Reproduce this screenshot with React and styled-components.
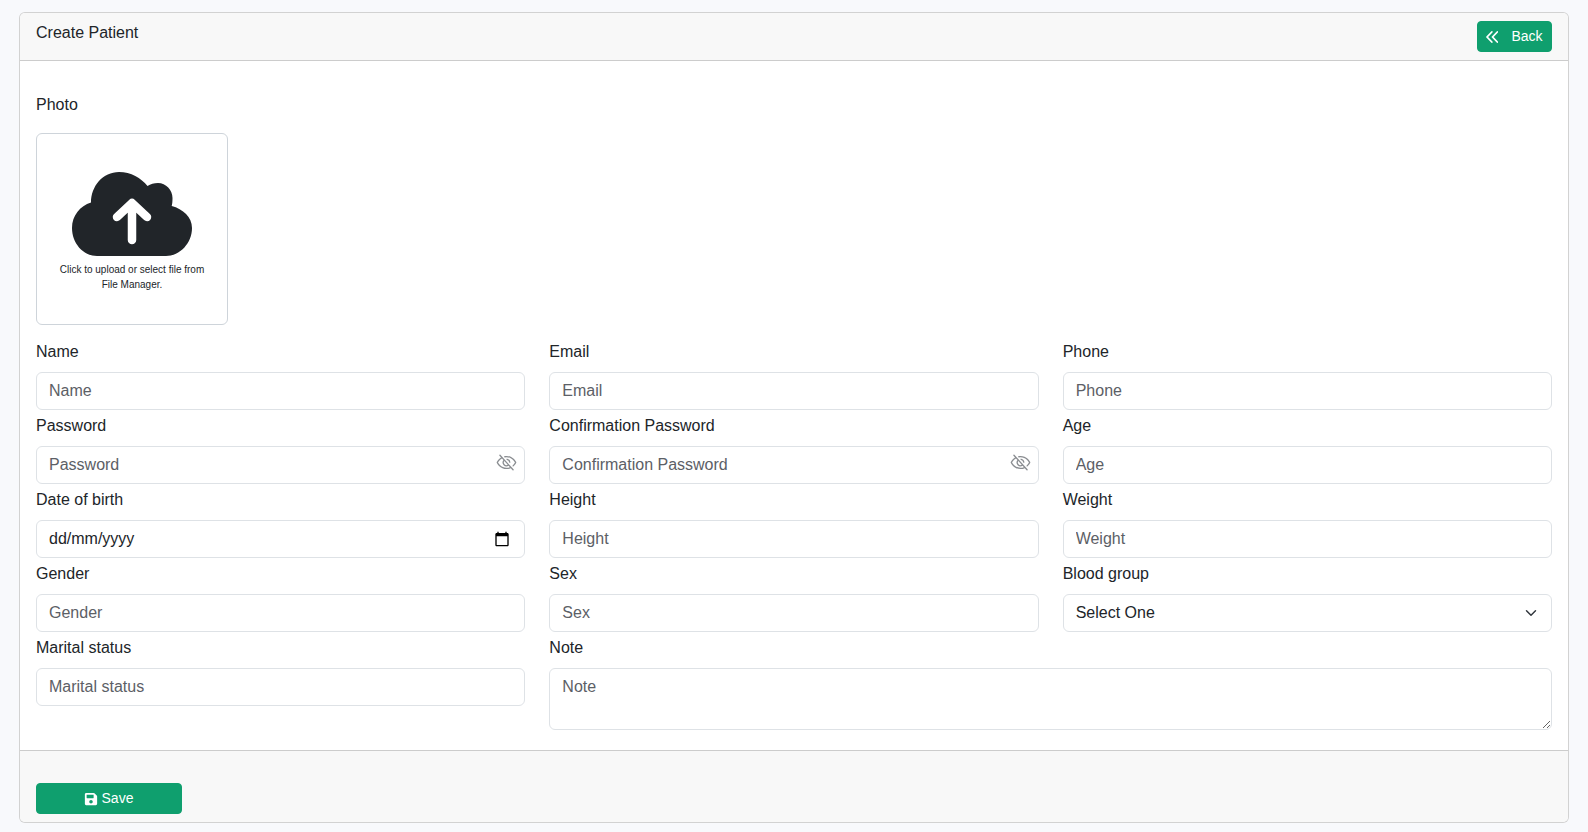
import React from "react";
import styled, { createGlobalStyle } from "styled-components";
import { FaSave } from "react-icons/fa";
import { PiEyeSlash } from "react-icons/pi";

const GlobalStyle = createGlobalStyle`
  html, body {
    margin: 0;
    padding: 0;
    background: #f8f9fc;
    color: #212529;
    font-family: "Liberation Sans", Arial, sans-serif;
    font-size: 16px;
    line-height: 24px;
  }
  * { box-sizing: border-box; }
`;

const Page = styled.div`
  padding: 12px 19px 9px 19px;
`;

const Card = styled.form`
  background: #fff;
  border: 1px solid rgba(0, 0, 0, 0.175);
  border-radius: 6px;
  height: 811px;
  display: flex;
  flex-direction: column;
`;

const CardHeader = styled.div`
  display: flex;
  justify-content: space-between;
  align-items: flex-start;
  height: 48px;
  padding: 8px 16px;
  background: #f8f8f8;
  border-bottom: 1px solid rgba(0, 0, 0, 0.175);
  border-radius: 5px 5px 0 0;
`;

const Title = styled.div`
  line-height: 24px;
`;

const CardBody = styled.div`
  flex: 1;
  padding: 32px 16px 0;
`;

const CardFooter = styled.div`
  height: 72px;
  padding: 32px 16px 8px;
  background: #f8f8f8;
  border-top: 1px solid rgba(0, 0, 0, 0.175);
  border-radius: 0 0 5px 5px;
`;

const GreenButton = styled.button`
  display: inline-flex;
  align-items: center;
  justify-content: center;
  gap: ${(p) => p.$gap}px;
  width: ${(p) => p.$width}px;
  height: 31px;
  padding: 0;
  border: 1px solid #0f9f6e;
  border-radius: 4px;
  background: #0f9f6e;
  color: #fff;
  font: 14px/21px "Liberation Sans", Arial, sans-serif;
`;

const SaveButton = styled(GreenButton)`
  padding-right: 1px;
`;

const Label = styled.label`
  display: block;
  height: 24px;
  line-height: 24px;
  margin-bottom: 8px;
`;

const PhotoLabel = styled(Label)`
  margin-bottom: 16px;
`;

const UploadBox = styled.div`
  width: 192px;
  height: 192px;
  margin-bottom: 15px;
  padding: 38px 16px 0;
  border: 1px solid #ced4da;
  border-radius: 6px;
  display: flex;
  flex-direction: column;
  align-items: center;
`;

const UploadText = styled.div`
  margin-top: 6px;
  font-size: 10px;
  line-height: 15px;
  text-align: center;
`;

const Grid = styled.div`
  display: grid;
  grid-template-columns: repeat(3, 1fr);
  column-gap: 24px;
  row-gap: 4px;
`;

const Field = styled.div`
  grid-column: span ${(p) => p.$span || 1};
`;

const InputWrap = styled.div`
  position: relative;
`;

const Input = styled.input`
  display: block;
  width: 100%;
  height: 38px;
  padding: 6px 12px;
  border: 1px solid #dee2e6;
  border-radius: 6px;
  background: #fff;
  color: #212529;
  font: 16px/24px "Liberation Sans", Arial, sans-serif;
  outline: none;

  &::placeholder {
    color: #5c6066;
    opacity: 1;
  }
`;

const TextArea = styled.textarea`
  display: block;
  width: 100%;
  height: 62px;
  padding: 6px 12px;
  border: 1px solid #dee2e6;
  border-radius: 6px;
  background: #fff;
  color: #212529;
  font: 16px/24px "Liberation Sans", Arial, sans-serif;
  outline: none;

  &::placeholder {
    color: #5c6066;
    opacity: 1;
  }
`;

const SelectBox = styled.select`
  display: block;
  width: 100%;
  height: 38px;
  padding: 6px 36px 6px 12px;
  border: 1px solid #dee2e6;
  border-radius: 6px;
  color: #212529;
  font: 16px/24px "Liberation Sans", Arial, sans-serif;
  outline: none;
  appearance: none;
  background: #fff url("data:image/svg+xml,%3csvg xmlns='http://www.w3.org/2000/svg' viewBox='0 0 16 16'%3e%3cpath fill='none' stroke='%23343a40' stroke-linecap='round' stroke-linejoin='round' stroke-width='2' d='m2 5 6 6 6-6'/%3e%3c/svg%3e") no-repeat right 12px center / 16px 12px;
`;

const EyeToggle = styled.span`
  position: absolute;
  top: 6px;
  right: 8px;
  display: flex;
  color: #8a8d91;
  font-size: 21px;
`;

const CalendarIcon = styled.svg`
  position: absolute;
  top: 11px;
  right: 15px;
  width: 16px;
  height: 16px;
`;

const CloudUpload = () => (
  <svg width="120" height="84" viewBox="0 0 120 84" aria-hidden="true">
    <path
      fill="#212529"
      d="M25 84C11 84 0 71 0 56 0 44 8 34 19 30.6 19 14 31 0 47 0c12 0 22 6 28.5 14 3-2 6.500-3 10.500-3 8 0 14.500 7 14.500 15 0 3-.2 6-.8 8C111 37 120 45 120 56c0 15-12 28-26 28Z"
    />
    <path
      fill="none"
      stroke="#fff"
      strokeWidth="8.5"
      strokeLinecap="round"
      strokeLinejoin="round"
      d="M60 68V31M45 45l15-14 15 14"
    />
  </svg>
);

const DoubleChevron = () => (
  <svg width="12" height="12" viewBox="0 0 12 12" aria-hidden="true">
    <path
      fill="none"
      stroke="#fff"
      strokeWidth="1.8"
      strokeLinecap="round"
      strokeLinejoin="round"
      d="M5.800 1 1 6l4.800 5M11.300 1 6.500 6l4.800 5"
    />
  </svg>
);

const fields = [
  { label: "Name" },
  { label: "Email" },
  { label: "Phone" },
  { label: "Password", eye: true },
  { label: "Confirmation Password", eye: true },
  { label: "Age" },
  { label: "Date of birth", date: true },
  { label: "Height" },
  { label: "Weight" },
  { label: "Gender" },
  { label: "Sex" },
];

const App = () => (
  <Page>
    <GlobalStyle />
    <Card onSubmit={(e) => e.preventDefault()}>
      <CardHeader>
        <Title>Create Patient</Title>
        <GreenButton type="button" $width={75} $gap={13}>
          <DoubleChevron />
          Back
        </GreenButton>
      </CardHeader>
      <CardBody>
        <PhotoLabel>Photo</PhotoLabel>
        <UploadBox>
          <CloudUpload />
          <UploadText>Click to upload or select file from File Manager.</UploadText>
        </UploadBox>
        <Grid>
          {fields.map((f) => (
            <Field key={f.label}>
              <Label>{f.label}</Label>
              <InputWrap>
                {f.date ? (
                  <Input defaultValue="dd/mm/yyyy" />
                ) : (
                  <Input placeholder={f.label} />
                )}
                {f.eye && (
                  <EyeToggle>
                    <PiEyeSlash />
                  </EyeToggle>
                )}
                {f.date && (
                  <CalendarIcon viewBox="0 0 24 24" aria-hidden="true">
                    <path d="M20 3h-1V1h-2v2H7V1H5v2H4c-1.100 0-2 .9-2 2v16c0 1.100.9 2 2 2h16c1.100 0 2-.9 2-2V5c0-1.100-.9-2-2-2zm0 18H4V8h16v13z" />
                  </CalendarIcon>
                )}
              </InputWrap>
            </Field>
          ))}
          <Field>
            <Label>Blood group</Label>
            <SelectBox defaultValue="">
              <option value="">Select One</option>
            </SelectBox>
          </Field>
          <Field>
            <Label>Marital status</Label>
            <Input placeholder="Marital status" />
          </Field>
          <Field $span={2}>
            <Label>Note</Label>
            <TextArea placeholder="Note" />
          </Field>
        </Grid>
      </CardBody>
      <CardFooter>
        <SaveButton type="submit" $width={146} $gap={4}>
          <FaSave size={14} />
          Save
        </SaveButton>
      </CardFooter>
    </Card>
  </Page>
);

export default App;
